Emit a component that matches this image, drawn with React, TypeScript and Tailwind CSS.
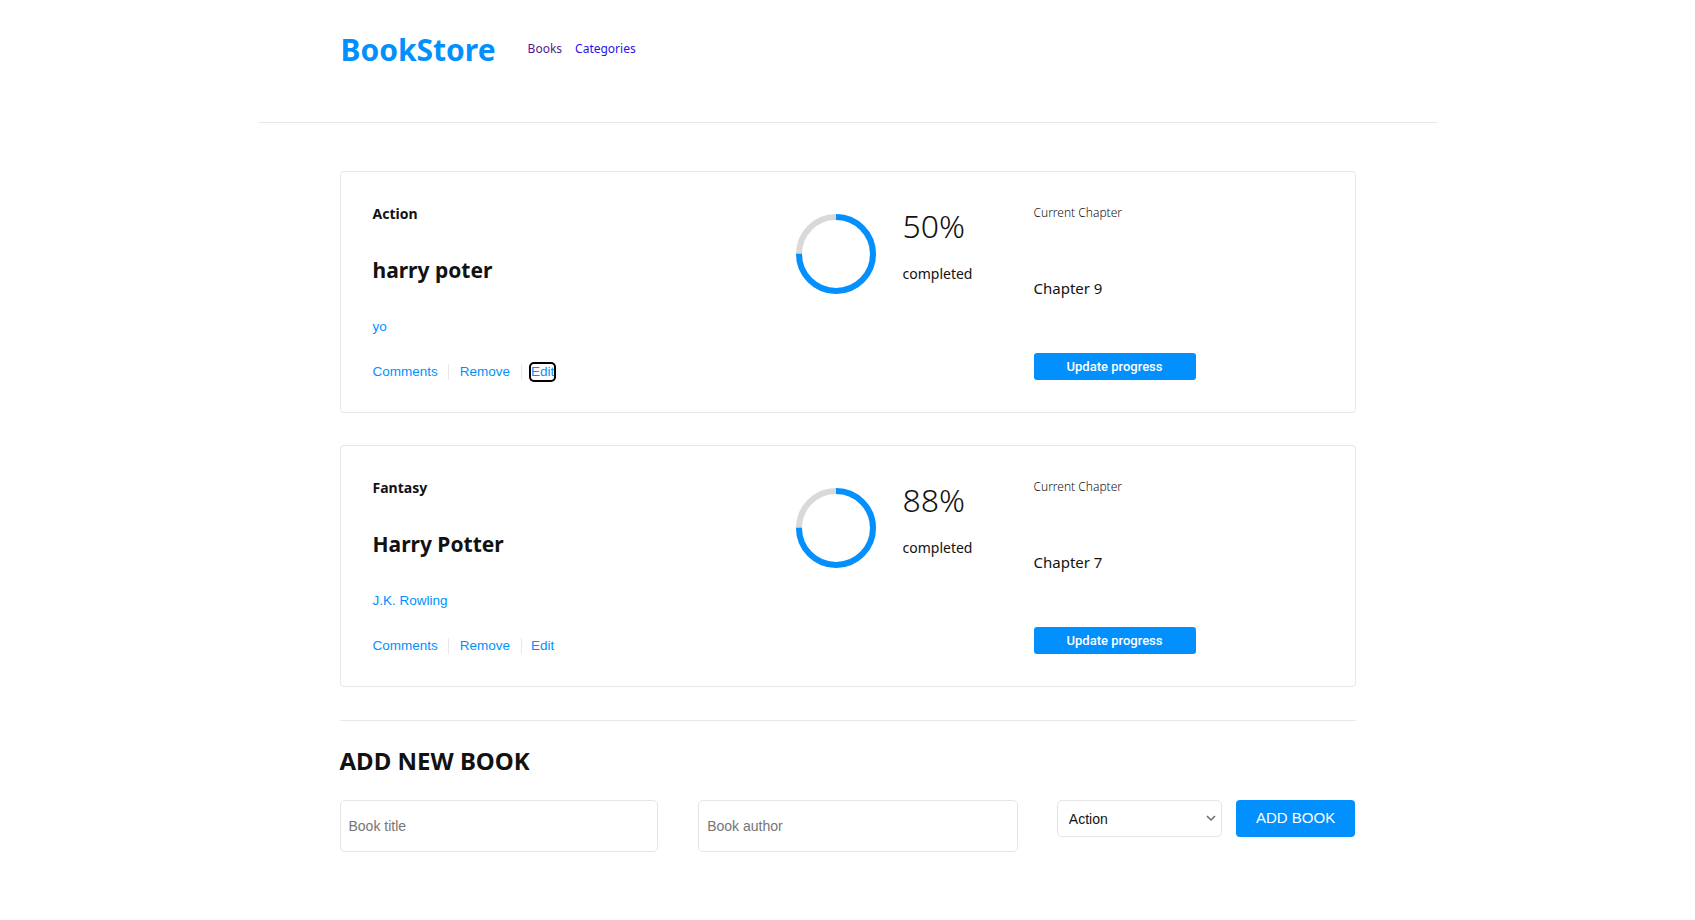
import React from 'react';

interface Book {
  category: string;
  title: string;
  author: string;
  progress: number;
  chapter: string;
  focusEdit?: boolean;
}

const books: Book[] = [
  { category: 'Action', title: 'harry poter', author: 'yo', progress: 50, chapter: 'Chapter 9', focusEdit: true },
  { category: 'Fantasy', title: 'Harry Potter', author: 'J.K. Rowling', progress: 88, chapter: 'Chapter 7' },
];

const segoe = "font-['Segoe_UI','Noto_Sans',sans-serif]";

const ProgressRing: React.FC = () => {
  const r = 37;
  const c = 2 * Math.PI * r;
  return (
    <svg width="80" height="80" viewBox="0 0 80 80" className="shrink-0">
      <circle cx="40" cy="40" r={r} fill="none" stroke="#d9d9d9" strokeWidth="6" />
      <circle
        cx="40"
        cy="40"
        r={r}
        fill="none"
        stroke="#0290ff"
        strokeWidth="6"
        strokeDasharray={`${c * 0.75} ${c}`}
        transform="rotate(-90 40 40)"
      />
    </svg>
  );
};

const BookCard: React.FC<{ book: Book }> = ({ book }) => (
  <div className="flex border border-[#e8e8e8] rounded-[4px] bg-white pl-8 pt-8 pb-[30px]">
    {/* left: info */}
    <div className="w-[423px] shrink-0">
      <div className={`${segoe} text-sm leading-5 font-bold text-[#121212]`}>{book.category}</div>
      <h2 className={`${segoe} mt-8 text-[21px] leading-[29px] font-bold text-[#121212]`}>{book.title}</h2>
      <div className="mt-[32px] font-['Liberation_Sans',Arial,sans-serif] text-[13.5px] leading-5 text-[#0290ff]">{book.author}</div>
      <div className="mt-[25px] flex items-center font-['Liberation_Sans',Arial,sans-serif] text-[13.5px] leading-5 text-[#0290ff]">
        <button className="pr-[10px]">Comments</button>
        <button className="px-[11px] border-l border-[#e8e8e8] leading-4">Remove</button>
        <span className="pl-[9px] border-l border-[#e8e8e8] leading-4">
          <button className={book.focusEdit ? 'rounded-[3px] ring-2 ring-black leading-4' : 'leading-4'}>Edit</button>
        </span>
      </div>
    </div>

    {/* middle: progress */}
    <div className="w-[238px] shrink-0 flex items-start pt-[10px]">
      <ProgressRing />
      <div className="ml-[27px] -mt-2">
        <div className={`${segoe} text-[32px] leading-10 font-light text-[#121212]`}>{book.progress}%</div>
        <div className={`${segoe} mt-[18px] text-sm leading-5 text-[#121212]`}>completed</div>
      </div>
    </div>

    {/* right: chapter */}
    <div className="pt-[1px]">
      <div className={`${segoe} text-xs leading-4 font-light text-[#121212]`}>Current Chapter</div>
      <div className={`${segoe} mt-[55px] text-[15px] leading-6 text-[#121212]`}>{book.chapter}</div>
      <button className="mt-[53px] w-[162px] h-[27px] rounded-[3px] bg-[#0290ff] text-white font-['Roboto',sans-serif] text-[13px] font-medium">
        Update progress
      </button>
    </div>
  </div>
);

const App: React.FC = () => {
  return (
    <div className="min-h-screen bg-white pb-10">
      <header className="mx-auto w-[1178px] border-b border-[#e8e8e8]">
        <div className="ml-[82px] flex items-center pt-[25px] pb-[47px]">
          <h1 className={`${segoe} text-[30px] leading-[50px] font-bold text-[#0290ff]`}>BookStore</h1>
          <nav className={`${segoe} ml-[32px] flex gap-[13px] text-xs leading-5 -mt-[3px]`}>
            <a className="text-[#551a8b]">Books</a>
            <a className="text-[#2613e8]">Categories</a>
          </nav>
        </div>
      </header>

      <main className="mx-auto w-[1016px] pt-[48px]">
        <div className="flex flex-col gap-[32px]">
          {books.map((b) => (
            <BookCard key={b.title} book={b} />
          ))}
        </div>

        <div className="mt-[33px] border-t border-[#e8e8e8] pt-[24px]">
          <h2 className={`${segoe} text-2xl leading-8 font-bold text-[#121212]`}>ADD NEW BOOK</h2>
          <form className="mt-[23px] flex items-start font-['Liberation_Sans',Arial,sans-serif]">
            <input
              placeholder="Book title"
              className="w-[319px] h-[52px] rounded-[5px] border border-[#e5e5e5] px-2 text-sm placeholder:text-[#757575] outline-none"
            />
            <input
              placeholder="Book author"
              className="ml-[40px] w-[320px] h-[52px] rounded-[5px] border border-[#e5e5e5] px-2 text-sm placeholder:text-[#757575] outline-none"
            />
            <div className="relative ml-[39px] w-[165px] h-[37px]">
              <select className="w-full h-full appearance-none rounded-[5px] border border-[#e5e5e5] bg-white pl-[11px] text-sm text-[#121212] outline-none">
                <option>Action</option>
                <option>Fantasy</option>
              </select>
              <svg
                className="pointer-events-none absolute right-[6px] top-[14px]"
                width="10"
                height="8"
                viewBox="0 0 10 8"
                fill="none"
                stroke="#6b6b6b"
                strokeWidth="1.5"
              >
                <path d="M1 2 L5 6 L9 2" />
              </svg>
            </div>
            <button
              type="button"
              className="ml-[14px] w-[120px] h-[37px] rounded-[4px] bg-[#0290ff] text-white text-[15px]"
            >
              ADD BOOK
            </button>
          </form>
        </div>
      </main>
    </div>
  );
};

export default App;
